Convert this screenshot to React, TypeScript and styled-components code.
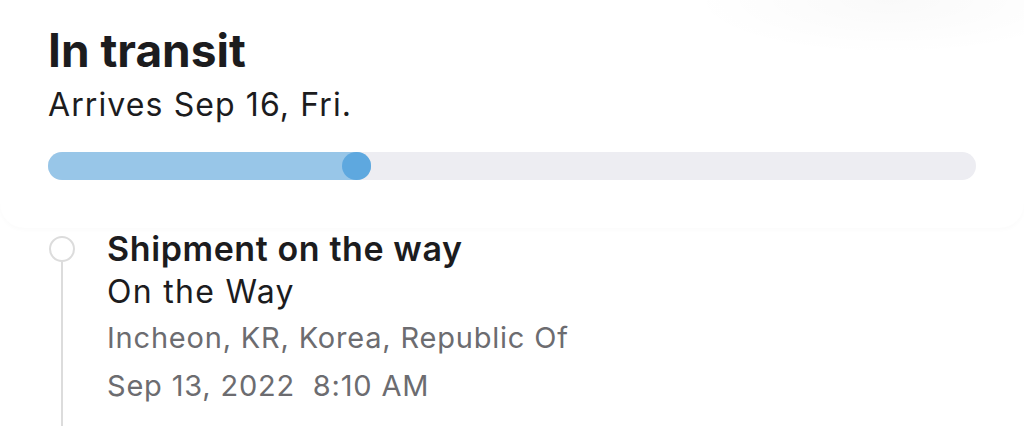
import React from "react";
import styled, { createGlobalStyle } from "styled-components";

const GlobalStyle = createGlobalStyle`
  html, body {
    margin: 0;
    padding: 0;
    background: #ffffff;
  }
  body {
    font-family: Inter, "Noto Sans", "Liberation Sans", sans-serif;
    color: #1c1c1e;
    -webkit-font-smoothing: antialiased;
  }
`;

const Page = styled.div`
  width: 1024px;
  height: 426px;
  overflow: hidden;
  background: #ffffff;
`;

const Card = styled.section`
  padding: 22px 48px 48px;
  background:
    radial-gradient(ellipse 200px 55px at 890px 0px, rgba(0, 0, 0, 0.022), rgba(0, 0, 0, 0) 100%),
    #ffffff;
  border-radius: 0 0 24px 24px;
  box-shadow: 0 2px 4px rgba(0, 0, 0, 0.018);
`;

const Title = styled.h1`
  margin: 0;
  font-size: 46px;
  line-height: 56px;
  font-weight: 700;
  letter-spacing: 0px;
  color: #1c1c1e;
`;

const Subtitle = styled.p`
  margin: 5px 0 0;
  font-size: 32px;
  line-height: 44px;
  font-weight: 400;
  letter-spacing: 1.1px;
  color: #1c1c1e;
`;

const Track = styled.div`
  margin-top: 25px;
  height: 28px;
  border-radius: 14px;
  background: #ededf2;
  display: flex;
`;

const Fill = styled.div`
  height: 100%;
  border-radius: 14px;
  background: #98c6e8;
  display: flex;
  justify-content: flex-end;
`;

const Knob = styled.span`
  width: 29px;
  height: 28px;
  border-radius: 50%;
  background: #5ea8df;
`;

const Timeline = styled.ol`
  list-style: none;
  margin: 0;
  padding: 0 48px 0 48px;
`;

const Event = styled.li`
  display: grid;
  grid-template-columns: 28px 1fr;
  column-gap: 31px;
`;

const Marker = styled.div`
  display: flex;
  flex-direction: column;
  align-items: center;
  padding-top: 8px;
`;

const Dot = styled.span`
  width: 22px;
  height: 22px;
  border-radius: 50%;
  border: 2px solid #dcdcdc;
  background: #ffffff;
  flex: none;
`;

const Line = styled.span`
  width: 2px;
  flex: 1;
  background: #dcdcdc;
`;

const Details = styled.div`
  display: flex;
  flex-direction: column;
  padding-bottom: 20px;
`;

const EventTitle = styled.h2`
  margin: 0;
  font-size: 34px;
  line-height: 42px;
  font-weight: 600;
  letter-spacing: 0.6px;
  color: #1c1c1e;
`;

const EventStatus = styled.p`
  margin: 0;
  font-size: 32px;
  line-height: 44px;
  font-weight: 400;
  letter-spacing: 1.3px;
  color: #1c1c1e;
`;

const EventMeta = styled.p`
  margin: 0;
  font-size: 29px;
  line-height: 48px;
  font-weight: 400;
  letter-spacing: 0.8px;
  color: #6c6c70;
  white-space: pre;
`;

export default function App() {
  const progress = 34.8;
  return (
    <>
      <GlobalStyle />
      <Page>
        <Card>
          <Title>In transit</Title>
          <Subtitle>Arrives Sep 16, Fri.</Subtitle>
          <Track>
            <Fill style={{ width: `${progress}%` }}>
              <Knob />
            </Fill>
          </Track>
        </Card>
        <Timeline>
          <Event>
            <Marker>
              <Dot />
              <Line />
            </Marker>
            <Details>
              <EventTitle>Shipment on the way</EventTitle>
              <EventStatus>On the Way</EventStatus>
              <EventMeta>Incheon, KR, Korea, Republic Of</EventMeta>
              <EventMeta>Sep 13, 2022  8:10 AM</EventMeta>
            </Details>
          </Event>
        </Timeline>
      </Page>
    </>
  );
}
